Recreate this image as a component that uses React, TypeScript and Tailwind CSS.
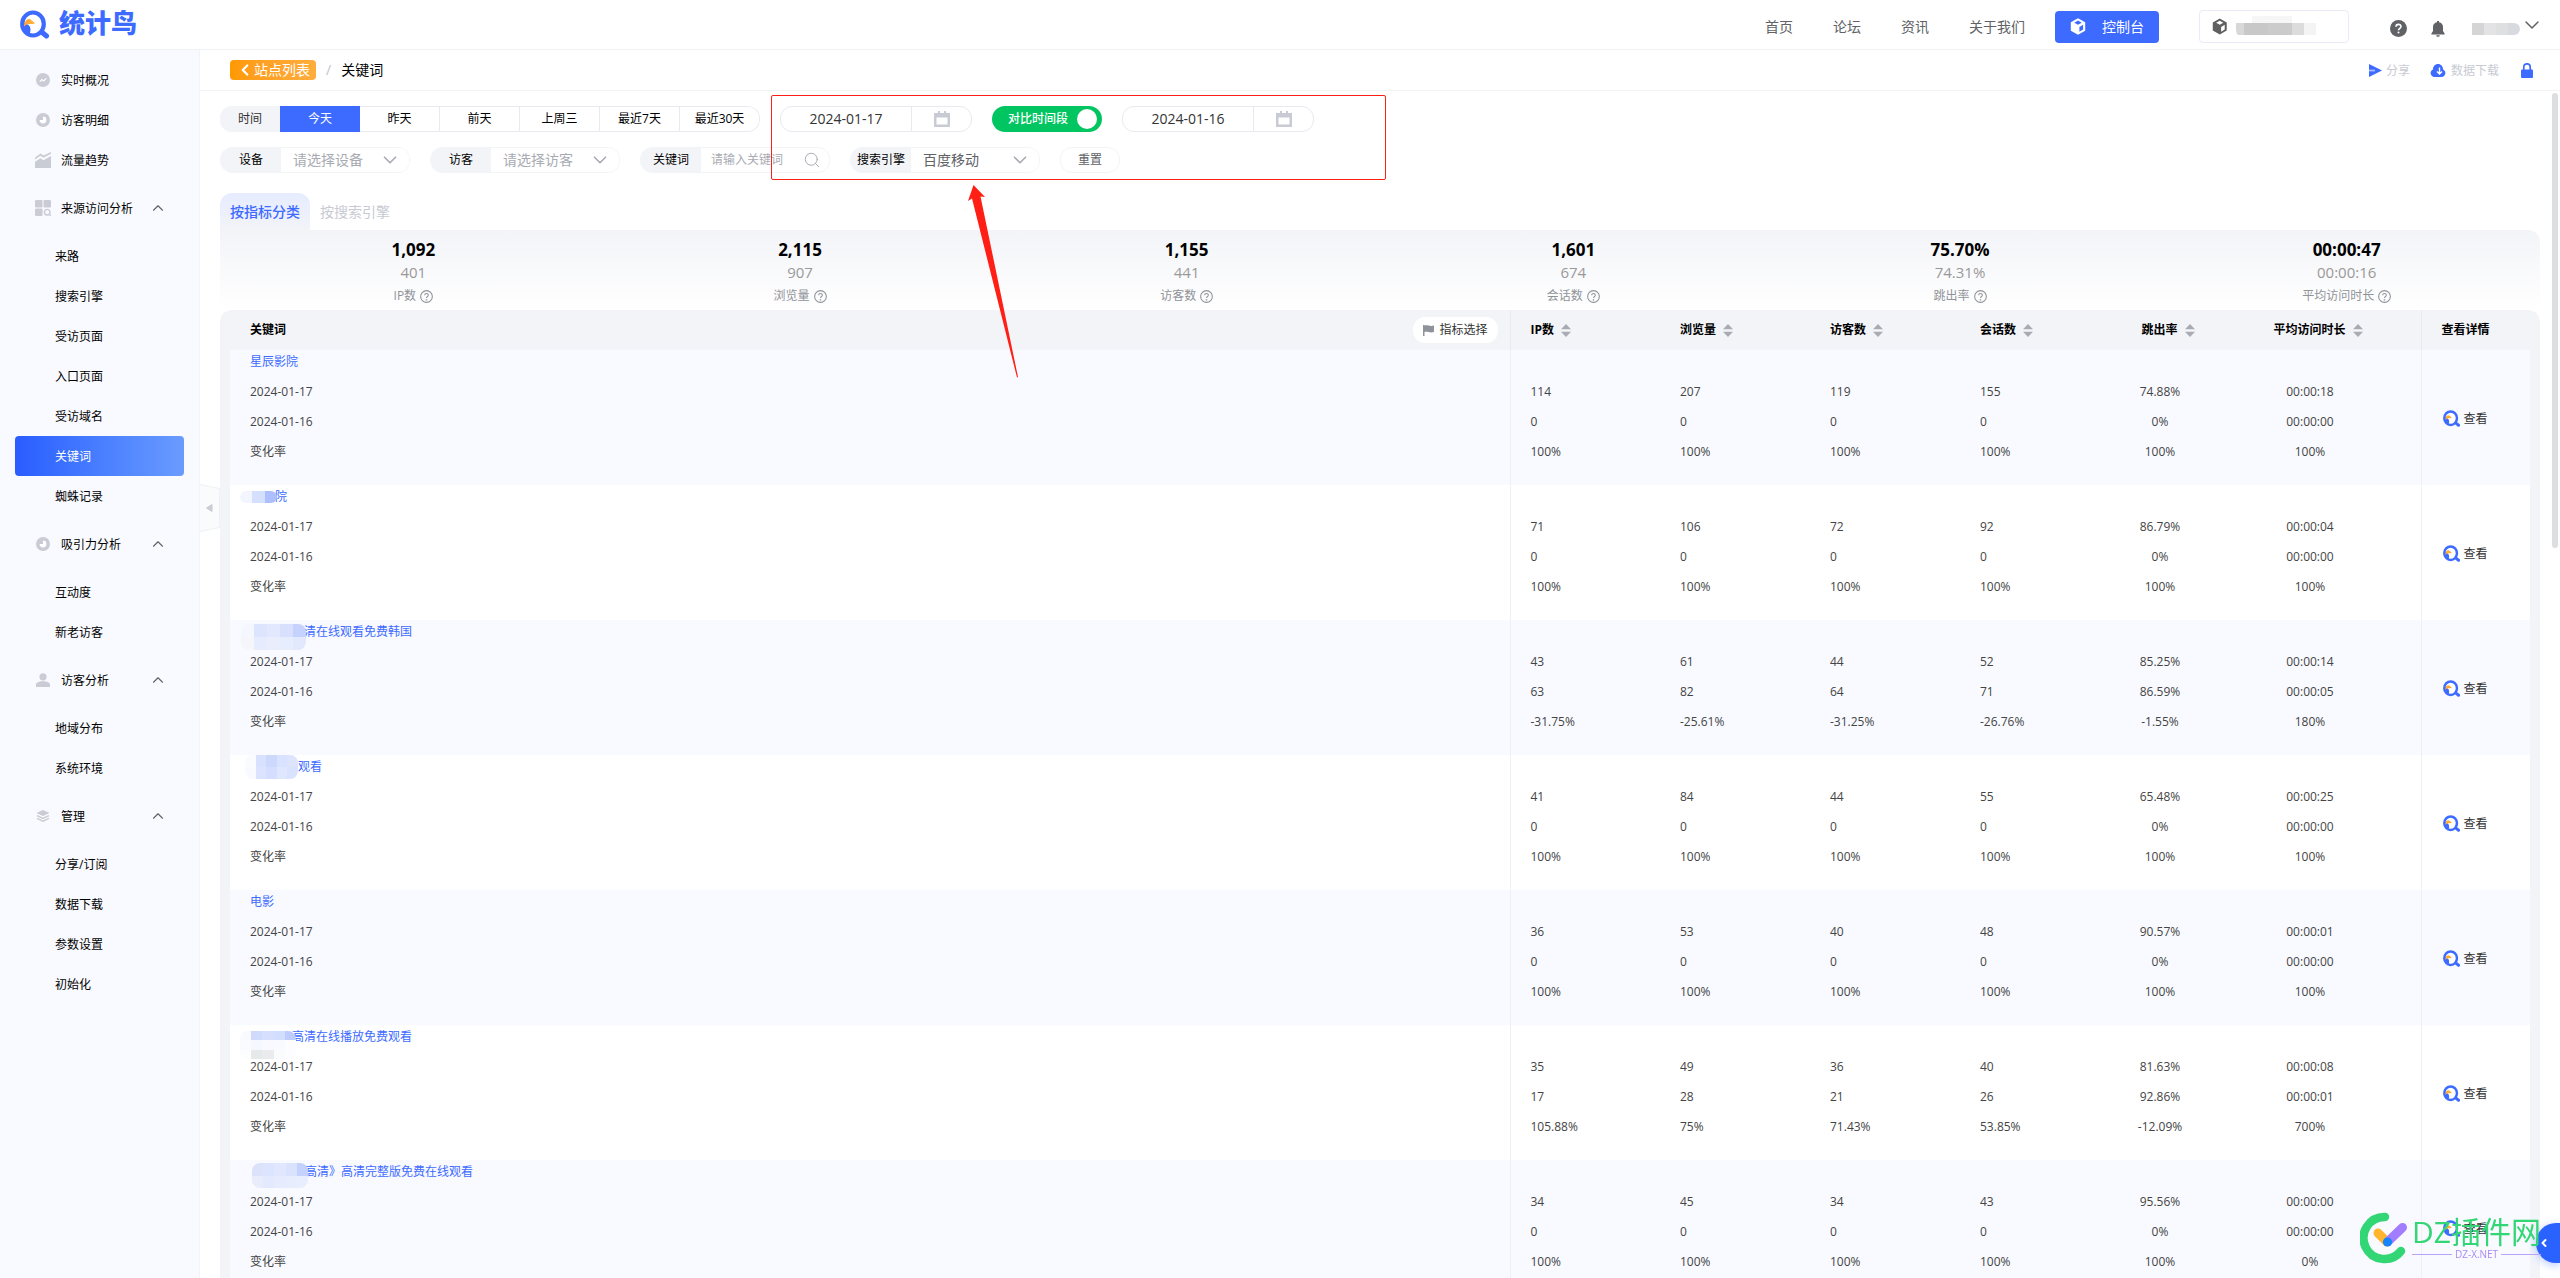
import React, { useState } from 'react';
import { ChevronDown, ChevronLeft, ChevronUp, Search } from 'lucide-react';
import clsx from 'clsx';

interface MenuItem {
  label: string;
  icon?: React.ReactNode;
  children?: string[];
}

interface MosaicShape {
  x: number;
  y: number;
  w: number;
  h: number;
  offset: number;
  rows: string[][];
}

interface KeywordRow {
  keyword: string;
  mosaic?: MosaicShape;
  // one array per metric: current, previous, change
  metrics: string[][];
}

const RealtimeIcon = () => (
  <svg width="14" height="14" viewBox="0 0 14 14">
    <circle cx="7" cy="7" r="7" fill="#c9ccd4" />
    <path d="M3.8 8.6l2.2-2 1.6 1.4 2.8-2.6" fill="none" stroke="#fff" strokeWidth="1.2" />
  </svg>
);

const PieIcon = () => (
  <svg width="14" height="14" viewBox="0 0 14 14">
    <circle cx="7" cy="7" r="7" fill="#c9ccd4" />
    <path d="M7 3.6A3.4 3.4 0 1 1 3.6 7H7z" fill="#fff" />
  </svg>
);

const TrendIcon = () => (
  <svg width="16" height="16" viewBox="0 0 16 16">
    <path d="M0 5.5L5.5 1.5l3 2L16 0v1.8L8.4 5.8l-3-2L0 7.6z" fill="#c9ccd4" />
    <path d="M0 9.8l5.5-3.6 3 2L16 4v12H0z" fill="#c9ccd4" />
  </svg>
);

const SourceIcon = () => (
  <svg width="16" height="16" viewBox="0 0 16 16">
    <rect width="7.5" height="7.5" rx="1" fill="#c9ccd4" />
    <rect x="8.5" width="7.5" height="7.5" rx="1" fill="#c9ccd4" />
    <rect y="8.5" width="7.5" height="7.5" rx="1" fill="#c9ccd4" />
    <circle cx="12.2" cy="12.2" r="2.8" fill="none" stroke="#c9ccd4" strokeWidth="1.4" />
    <path d="M14 14l2 2" stroke="#c9ccd4" strokeWidth="1.4" />
  </svg>
);

const PersonIcon = () => (
  <svg width="14" height="14" viewBox="0 0 14 14" fill="#c9ccd4">
    <circle cx="7" cy="3.8" r="3.6" />
    <path d="M0 14v-2.4C0 9.4 3 8.8 5 8.2h4c2 .6 5 1.2 5 3.4V14z" />
  </svg>
);

const LayersIcon = () => (
  <svg width="14" height="12" viewBox="0 0 14 12">
    <path d="M7 0l6.5 3L7 6 .5 3z" fill="#c9ccd4" />
    <path d="M1 5.6l6 2.8 6-2.8M1 8.4l6 2.8 6-2.8" fill="none" stroke="#c9ccd4" strokeWidth="1.4" />
  </svg>
);

const CubeIcon = () => (
  <svg width="16" height="17" viewBox="0 0 16 17">
    <path
      fill="currentColor"
      fillRule="evenodd"
      d="M8 .3l7.2 4v8.4L8 16.7l-7.2-4V4.3zM8 2.6L4.3 4.7 8 6.8l3.7-2.1zM9.4 8.9v4.9l3.7-2.2V6.800z"
    />
  </svg>
);

const BirdIcon = ({ size }: { size: number }) => (
  <svg width={size} height={size} viewBox="0 0 29 28">
    <path d="M21 21l5.5 4.5" stroke="#3d6bff" strokeWidth="5" strokeLinecap="round" />
    <ellipse cx="13" cy="13.5" rx="10.8" ry="11.5" fill="#fff" stroke="#3d6bff" strokeWidth="4.2" />
    <path d="M4 12c4 2 6.500 3 6.500 7 0 3-1 5-2 5.500C4 23 1.500 17 2.500 12z" fill="#3d6bff" />
    <path d="M4 16c0-4 2-7.500 5-7.500 2 0 3 2.500 6.300 4-2.300 1.500-4 .8-6 1C7 13.700 5.500 14.500 4 16z" fill="#ffab38" />
  </svg>
);

const QuestionIcon = () => (
  <svg width="13" height="13" viewBox="0 0 12 12" fill="none" stroke="#909399">
    <circle cx="6" cy="6" r="5.4" />
    <path d="M4.3 4.9c0-2.3 3.4-2.2 3.4-.1C7.7 6 6 6 6 7.4" />
    <circle cx="6" cy="9" r=".3" />
  </svg>
);

const SortIcon = () => (
  <svg width="10" height="13" viewBox="0 0 10 13" fill="#a8abb2">
    <path d="M5 0l5 5.200H0zM5 13L0 7.800h10z" />
  </svg>
);

const CalendarIcon = () => (
  <svg width="16" height="16" viewBox="0 0 16 16">
    <path fill="#c8cbd4" fillRule="evenodd" d="M0 2h4V0h2v2h4V0h2v2h4v14H0zM2.500 6.500v7h11v-7z" />
  </svg>
);

const menu: MenuItem[] = [
  { label: '实时概况', icon: <RealtimeIcon /> },
  { label: '访客明细', icon: <PieIcon /> },
  { label: '流量趋势', icon: <TrendIcon /> },
  {
    label: '来源访问分析',
    icon: <SourceIcon />,
    children: ['来路', '搜索引擎', '受访页面', '入口页面', '受访域名', '关键词', '蜘蛛记录'],
  },
  { label: '吸引力分析', icon: <PieIcon />, children: ['互动度', '新老访客'] },
  { label: '访客分析', icon: <PersonIcon />, children: ['地域分布', '系统环境'] },
  { label: '管理', icon: <LayersIcon />, children: ['分享/订阅', '数据下载', '参数设置', '初始化'] },
];

const summary = [
  { value: '1,092', previous: '401', label: 'IP数' },
  { value: '2,115', previous: '907', label: '浏览量' },
  { value: '1,155', previous: '441', label: '访客数' },
  { value: '1,601', previous: '674', label: '会话数' },
  { value: '75.70%', previous: '74.31%', label: '跳出率' },
  { value: '00:00:47', previous: '00:00:16', label: '平均访问时长' },
];

const rows: KeywordRow[] = [
  {
    keyword: '星辰影院',
    metrics: [
      ['114', '0', '100%'],
      ['207', '0', '100%'],
      ['119', '0', '100%'],
      ['155', '0', '100%'],
      ['74.88%', '0%', '100%'],
      ['00:00:18', '00:00:00', '100%'],
    ],
  },
  {
    keyword: '院',
    mosaic: { x: -10, y: 6, w: 37, h: 12, offset: 25, rows: [['#f3f6ff', '#d5dffe', '#adc0fd']] },
    metrics: [
      ['71', '0', '100%'],
      ['106', '0', '100%'],
      ['72', '0', '100%'],
      ['92', '0', '100%'],
      ['86.79%', '0%', '100%'],
      ['00:00:04', '00:00:00', '100%'],
    ],
  },
  {
    keyword: '清在线观看免费韩国',
    mosaic: {
      x: -9,
      y: 4,
      w: 65,
      h: 26,
      offset: 54,
      rows: [
        ['#f5f7fe', '#dce4fe', '#e2e8fe', '#d8e0fd', '#c5d2fd'],
        ['#f4f6fa', '#e6ebfd', '#eaeefc', '#e8edfd', '#e2e9fd'],
      ],
    },
    metrics: [
      ['43', '63', '-31.75%'],
      ['61', '82', '-25.61%'],
      ['44', '64', '-31.25%'],
      ['52', '71', '-26.76%'],
      ['85.25%', '86.59%', '-1.55%'],
      ['00:00:14', '00:00:05', '180%'],
    ],
  },
  {
    keyword: '观看',
    mosaic: {
      x: -5,
      y: 0,
      w: 53,
      h: 24,
      offset: 48,
      rows: [
        ['#fafbff', '#d8e1fe', '#cdd8fd', '#d9e2fe', '#dde5fe'],
        ['#f8faff', '#dbe3fe', '#d5defe', '#dfe7fe', '#d9e2fe'],
      ],
    },
    metrics: [
      ['41', '0', '100%'],
      ['84', '0', '100%'],
      ['44', '0', '100%'],
      ['55', '0', '100%'],
      ['65.48%', '0%', '100%'],
      ['00:00:25', '00:00:00', '100%'],
    ],
  },
  {
    keyword: '电影',
    metrics: [
      ['36', '0', '100%'],
      ['53', '0', '100%'],
      ['40', '0', '100%'],
      ['48', '0', '100%'],
      ['90.57%', '0%', '100%'],
      ['00:00:01', '00:00:00', '100%'],
    ],
  },
  {
    keyword: '高清在线播放免费观看',
    mosaic: {
      x: -10,
      y: 6,
      w: 56,
      h: 28,
      offset: 42,
      rows: [
        ['#f8faff', '#cfdafd', '#d6dffe', '#d3ddfe', '#becdfd'],
        ['#fafbfe', '#f5f8ff', '#f8faff', '#f8faff', '#fdfdff'],
        ['#fcfdfe', '#e6e9ea', '#e9ebec', '#fafbfd', '#fdfdff'],
      ],
    },
    metrics: [
      ['35', '17', '105.88%'],
      ['49', '28', '75%'],
      ['36', '21', '71.43%'],
      ['40', '26', '53.85%'],
      ['81.63%', '92.86%', '-12.09%'],
      ['00:00:08', '00:00:01', '700%'],
    ],
  },
  {
    keyword: '高清》高清完整版免费在线观看',
    mosaic: {
      x: 2,
      y: 3,
      w: 56,
      h: 25,
      offset: 55,
      rows: [
        ['#dce2fa', '#dce4fe', '#e0e7fe', '#dae3fe', '#c4d1fd'],
        ['#e9edfb', '#e4eafe', '#e6ecfe', '#e8edfe', '#e8eefe'],
      ],
    },
    metrics: [
      ['34', '0', '100%'],
      ['45', '0', '100%'],
      ['34', '0', '100%'],
      ['43', '0', '100%'],
      ['95.56%', '0%', '100%'],
      ['00:00:00', '00:00:00', '0%'],
    ],
  },
];

const Mosaic = ({ shape }: { shape: MosaicShape }) => (
  <span
    className="absolute flex flex-col overflow-hidden rounded-lg"
    style={{ left: shape.x, top: shape.y, width: shape.w, height: shape.h }}
  >
    {shape.rows.map((colors, i) => (
      <span key={i} className="flex flex-1">
        {colors.map((color, j) => (
          <span key={j} className="flex-1" style={{ backgroundColor: color }} />
        ))}
      </span>
    ))}
  </span>
);

const Header = () => (
  <header className="flex h-[50px] shrink-0 items-center border-b border-[#f0f1f4] bg-white pl-5 pr-4">
    <a href="#home" className="flex items-center gap-[10px]">
      <BirdIcon size={29} />
      <span className="pb-1 text-[26px] font-black leading-8 text-[#3d6bff]">统计鸟</span>
    </a>
    <nav className="ml-auto flex items-center gap-10 pt-1 text-sm text-[#606266]">
      <a href="#home">首页</a>
      <a href="#forum">论坛</a>
      <a href="#news">资讯</a>
      <a href="#about">关于我们</a>
    </nav>
    <button className="ml-[30px] mt-1 flex h-8 w-[104px] items-center gap-4 rounded bg-[#3d6bff] pl-[15px] text-sm text-white">
      <CubeIcon />
      控制台
    </button>
    <button aria-label="站点" className="ml-10 mt-1 flex h-[33px] w-[150px] items-center rounded border border-[#ebebf7] pl-3 text-[#606060]">
      <CubeIcon />
      <span className="ml-2 flex h-[22px] w-[116px] flex-col overflow-hidden rounded-lg">
        <span className="ml-4 h-[7px] w-[40px] bg-[#f6f6f7]" />
        <span className="flex h-3">
          <span className="w-2 bg-[#d8d8d8]" />
          <span className="w-6 bg-[#c8c8c9]" />
          <span className="w-6 bg-[#cbcbcb]" />
          <span className="w-3 bg-[#dcdcdc]" />
          <span className="w-3 bg-[#f4f4f5]" />
        </span>
      </span>
    </button>
    <button aria-label="帮助" className="ml-[41px] mt-2">
      <svg width="17" height="17" viewBox="0 0 17 17">
        <circle cx="8.5" cy="8.5" r="8.5" fill="#606266" />
        <path d="M6 6.800c0-3.300 5-3.200 5-.2 0 1.800-2.500 1.800-2.500 3.700" fill="none" stroke="#fff" strokeWidth="1.6" />
        <circle cx="8.5" cy="12.6" r="1" fill="#fff" />
      </svg>
    </button>
    <button aria-label="消息" className="ml-6 mt-2">
      <svg width="14" height="16" viewBox="0 0 14 16" fill="#606266">
        <path d="M6 0h2v1.200c2.600.5 4 2.300 4 4.800v4l1.600 2.500V13.500H.4V12.500L2 10V6c0-2.500 1.400-4.300 4-4.800zM5.200 14.300h3.600c0 2-3.600 2-3.600 0z" />
      </svg>
    </button>
    <button aria-label="账号" className="ml-[27px] flex items-center">
      <span className="mt-2 flex h-3 overflow-hidden rounded-r-lg">
        <span className="w-3 bg-[#d5d5d6]" />
        <span className="w-3 bg-[#e3e3e6]" />
        <span className="w-3 bg-[#dedfe1]" />
        <span className="w-3 bg-[#d7dade]" />
      </span>
      <ChevronDown size={24} strokeWidth={1.5} className="text-[#606266]" />
    </button>
  </header>
);

const Sidebar = () => (
  <aside className="w-[200px] shrink-0 border-r border-[#f3f4f8] bg-[#f9faff] pt-[10px] text-xs text-black">
    {menu.map((item) => (
      <div key={item.label}>
        <a
          href="#menu"
          className={clsx('flex items-center pl-[35px] pr-8', item.children ? 'h-14' : 'h-10')}
        >
          <span className="flex w-4 justify-center">{item.icon}</span>
          <span className="ml-[10px] pt-[2px]">{item.label}</span>
          {item.children && <ChevronUp size={18} strokeWidth={1.5} className="ml-auto text-[#606266]" />}
        </a>
        {item.children?.map((child) => (
          <a
            key={child}
            href="#menu"
            className={clsx(
              'mx-[15px] flex h-10 items-center pl-10 pt-[2px]',
              child === '关键词' && 'rounded bg-linear-to-r from-[#2a5cff] to-[#6a9bff] text-white'
            )}
          >
            {child}
          </a>
        ))}
      </div>
    ))}
  </aside>
);

const Breadcrumb = () => (
  <div className="flex h-[41px] shrink-0 items-center border-b border-[#f3f4f6] pl-[30px] pr-[27px] text-sm">
    <a
      href="#sites"
      className="flex h-5 w-[86px] items-center rounded bg-linear-to-r from-[#ff9900] to-[#ffad3d] pl-[6px] text-white"
    >
      <ChevronLeft size={18} strokeWidth={3} />
      站点列表
    </a>
    <span className="mx-[10px] text-[#c0c4cc]">/</span>
    <span className="text-black">关键词</span>
    <div className="ml-auto flex items-center text-xs text-[#c8cad3]">
      <a href="#share" className="flex items-center gap-1">
        <svg width="13" height="13" viewBox="0 0 13 13">
          <path d="M0 0l13 6.500L0 13z" fill="#3d6bff" />
          <path d="M0 6.500h6" stroke="#a9bcff" strokeWidth="1.8" />
        </svg>
        <span className="pt-[2px]">分享</span>
      </a>
      <a href="#download" className="ml-5 flex items-center gap-[5px]">
        <svg width="16" height="13" viewBox="0 0 16 13">
          <path d="M4 13a4 4 0 0 1-1-7.600C3 2.500 5 0 8 0s5 2.500 5 5.400A4 4 0 0 1 12 13z" fill="#3d6bff" />
          <path d="M9.500 3.500v6M7 7.500l2.500 2.500L12 7.500" fill="none" stroke="#fff" strokeWidth="1.4" />
        </svg>
        <span className="pt-[2px]">数据下载</span>
      </a>
      <button aria-label="锁定" className="ml-[22px]">
        <svg width="12" height="15" viewBox="0 0 12 15">
          <path d="M2.800 7V4a3.200 3.200 0 0 1 6.400 0v3" fill="none" stroke="#3d6bff" strokeWidth="1.7" />
          <rect y="6.5" width="12" height="8.5" rx="1" fill="#3d6bff" />
        </svg>
      </button>
    </div>
  </div>
);

const DateField = ({ label, value }: { label: string; value: string }) => (
  <label className="flex h-[26px] w-48 overflow-hidden rounded-xl border border-[#e8eaf0] bg-white">
    <input
      aria-label={label}
      defaultValue={value}
      className="w-[131px] border-r border-[#e8eaf0] text-center text-sm text-[#333] outline-none"
    />
    <span className="flex flex-1 items-center justify-center">
      <CalendarIcon />
    </span>
  </label>
);

const SelectField = ({ label, value, muted }: { label: string; value: string; muted?: boolean }) => (
  <label className="relative flex h-[26px] w-[190px] items-center overflow-hidden rounded-xl border border-[#f3f4f8]">
    <span className="flex h-full w-[60px] shrink-0 items-center justify-center bg-[#f3f4f8] text-xs text-black">
      {label}
    </span>
    <select
      className={clsx(
        'h-full flex-1 appearance-none bg-white pl-3 text-sm outline-none',
        muted ? 'text-[#a8abb2]' : 'text-[#606266]'
      )}
    >
      <option>{value}</option>
    </select>
    <ChevronDown size={22} strokeWidth={1.8} className="pointer-events-none absolute right-2 text-[#a8abb2]" />
  </label>
);

const Filters = () => {
  const [range, setRange] = useState('今天');
  const [compare, setCompare] = useState(true);

  return (
    <div className="flex flex-col gap-[15px]">
      <div className="flex items-center gap-5">
        <div className="flex h-[26px] w-[540px] overflow-hidden rounded-xl text-xs text-black">
          <span className="flex w-[60px] items-center justify-center bg-[#f3f4f8] text-[#333]">时间</span>
          {['今天', '昨天', '前天', '上周三', '最近7天', '最近30天'].map((name) => (
            <button
              key={name}
              onClick={() => setRange(name)}
              className={clsx(
                'w-20 last:rounded-r-xl',
                range === name ? 'bg-[#3d6bff] text-white' : 'border-y border-r border-[#e8eaf0] bg-white'
              )}
            >
              {name}
            </button>
          ))}
        </div>
        <DateField label="日期" value="2024-01-17" />
        <button
          role="switch"
          aria-checked={compare}
          onClick={() => setCompare(!compare)}
          className="flex h-[26px] w-[110px] items-center justify-between rounded-full bg-[#00c561] pl-4 pr-[5px] text-xs font-medium text-white"
        >
          对比时间段
          <span className="size-5 rounded-full bg-white" />
        </button>
        <DateField label="对比日期" value="2024-01-16" />
      </div>
      <div className="flex items-center gap-5">
        <SelectField label="设备" value="请选择设备" muted />
        <SelectField label="访客" value="请选择访客" muted />
        <label className="flex h-[26px] w-[190px] items-center overflow-hidden rounded-xl border border-[#f3f4f8] pr-2">
          <span className="flex h-full w-[60px] shrink-0 items-center justify-center bg-[#f3f4f8] text-xs text-black">
            关键词
          </span>
          <input
            placeholder="请输入关键词"
            className="w-0 flex-1 pl-[10px] text-xs outline-none placeholder:text-[#a8abb2]"
          />
          <Search size={18} strokeWidth={1.3} className="text-[#a8abb2]" />
        </label>
        <SelectField label="搜索引擎" value="百度移动" />
        <button className="h-[26px] w-[60px] rounded-xl border border-[#f3f4f8] text-xs text-[#606266]">重置</button>
      </div>
    </div>
  );
};

const Summary = () => (
  <div className="grid h-20 grid-cols-6 rounded-tr-xl bg-linear-to-b from-[#f3f4f8] to-white pt-[9px] text-center">
    {summary.map((item) => (
      <div key={item.label} className="flex flex-col items-center">
        <span className="text-[17px] font-bold leading-[22px] text-black">{item.value}</span>
        <span className="text-[15px] leading-[22px] text-[#999]">{item.previous}</span>
        <span className="flex items-center gap-1 text-xs leading-[26px] text-[#909399]">
          {item.label}
          <QuestionIcon />
        </span>
      </div>
    ))}
  </div>
);

const metricNames = ['IP数', '浏览量', '访客数', '会话数', '跳出率', '平均访问时长'];

const KeywordTable = () => (
  <div className="rounded-t-xl bg-[#f3f4f8] px-[10px]">
    <table className="w-full table-fixed border-collapse text-left text-xs text-[#444]">
      <colgroup>
        <col />
        <col className="w-[150px]" />
        <col className="w-[150px]" />
        <col className="w-[150px]" />
        <col className="w-[125px]" />
        <col className="w-[150px]" />
        <col className="w-[150px]" />
        <col className="w-9" />
        <col className="w-[109px]" />
      </colgroup>
      <thead>
        <tr className="h-10 text-black">
          <th className="border-r border-[#e9ebf1] p-0 pl-5">
            <div className="flex items-center justify-between pr-3">
              关键词
              <button className="flex h-[26px] w-[85px] items-center gap-[6px] rounded-xl bg-white pl-[10px] font-normal text-[#333]">
                <svg width="11" height="11" viewBox="0 0 11 11" fill="#909399">
                  <path d="M0 0h1.500v11H0zM1.500.5c3-1 5 1.300 9.500 0v6.500c-4.500 1.300-6.500-1-9.500 0z" />
                </svg>
                指标选择
              </button>
            </div>
          </th>
          {metricNames.map((name, i) => (
            <th key={name} className={clsx('p-0', i < 4 && 'pl-5')}>
              <div className={clsx('flex items-center gap-[7px]', i > 3 && 'justify-center pl-4')}>
                {name}
                <SortIcon />
              </div>
            </th>
          ))}
          <th className="p-0" />
          <th className="border-l border-[#e9ebf1] p-0 pl-5">查看详情</th>
        </tr>
      </thead>
      <tbody>
        {rows.map((row) => (
          <tr key={row.keyword} className="h-[135px] odd:bg-[#f9faff] even:bg-white">
            <td className="border-r border-[#eef0f5] p-0 pl-5 align-top">
              <div className="relative h-[27px] text-[#3d6bff]">
                <a href="#keyword" className="block leading-6" style={{ paddingLeft: row.mosaic?.offset }}>
                  {row.keyword}
                </a>
                {row.mosaic && <Mosaic shape={row.mosaic} />}
              </div>
              <div className="relative leading-[30px]">
                <p>2024-01-17</p>
                <p>2024-01-16</p>
                <p>变化率</p>
              </div>
            </td>
            {row.metrics.map((values, i) => (
              <td
                key={i}
                className={clsx('p-0 pt-[27px] align-top leading-[30px]', i < 4 ? 'pl-5' : 'text-center')}
              >
                {values.map((value, j) => (
                  <p key={j}>{value}</p>
                ))}
              </td>
            ))}
            <td className="p-0" />
            <td className="border-l border-[#eef0f5] p-0 pl-[21px] pt-[2px]">
              <a href="#detail" className="flex items-center gap-1 text-[#333]">
                <BirdIcon size={17} />
                查看
              </a>
            </td>
          </tr>
        ))}
      </tbody>
    </table>
  </div>
);

const Annotation = () => (
  <>
    <div className="pointer-events-none absolute left-[771px] top-[95px] h-[85px] w-[615px] rounded-xs border border-[#ff1f14]" />
    <svg className="pointer-events-none absolute left-[968px] top-[185px]" width="51" height="193" viewBox="0 0 51 193">
      <path d="M5.500 0L0 16l4-2.500L49 192.500l1-.5L12.500 11.500 17 12z" fill="#ff1f14" />
    </svg>
  </>
);

const Watermark = () => (
  <div className="pointer-events-none fixed bottom-[14px] right-[19px] flex items-center gap-1">
    <svg width="48" height="52" viewBox="0 0 48 52" fill="none" strokeLinecap="round">
      <path d="M25 5A21 21 0 1 0 41 39" stroke="#33d675" strokeWidth="8.5" />
      <path d="M18 21l9 9" stroke="#ffb52e" strokeWidth="9" />
      <path d="M42.500 15.500L28 29.500" stroke="#a27dff" strokeWidth="9" />
      <circle cx="27.5" cy="30" r="4.6" fill="#1684fc" />
    </svg>
    <div className="flex flex-col">
      <span className="whitespace-nowrap text-[30px] leading-8 text-[#33d675]">DZ插件网</span>
      <span className="flex items-center gap-[3px] text-[10px] leading-3 text-[#a98bf5]">
        <span className="h-px flex-1 bg-[#b9a3f7]" />
        DZ-X.NET
        <span className="h-px flex-1 bg-[#b9a3f7]" />
      </span>
    </div>
  </div>
);

const App: React.FC = () => {
  return (
    <div className="relative flex h-screen flex-col overflow-hidden bg-white font-['Open_Sans','Noto_Sans_CJK_SC',sans-serif]">
      <Header />
      <div className="flex min-h-0 flex-1">
        <Sidebar />
        <main className="relative flex min-w-0 flex-1 flex-col">
          <Breadcrumb />
          <div className="min-h-0 flex-1 overflow-hidden px-5 pt-[15px]">
            <Filters />
            <div className="mt-5 flex h-[37px] text-sm">
              <button className="w-[90px] rounded-t-xl bg-linear-to-b from-[#e6ecff] to-[#f3f4f8] font-medium text-[#3d6bff]">
                按指标分类
              </button>
              <button className="w-[90px] text-[#c8cad3]">按搜索引擎</button>
            </div>
            <Summary />
            <KeywordTable />
          </div>
          <button aria-label="收起菜单" className="absolute left-0 top-[434px]">
            <svg width="20" height="48" viewBox="0 0 20 48">
              <path d="M0 .5l19.500 4v39L0 47.500" fill="#fafbfd" stroke="#eef0f5" />
              <path d="M6.500 24l5.500-3.500v7z" fill="#c9ccd4" stroke="#c9ccd4" strokeLinejoin="round" />
            </svg>
          </button>
          <div className="absolute right-[2px] top-[43px] h-[455px] w-[6px] rounded-full bg-[#dddee0]" />
        </main>
      </div>
      <Annotation />
      <button
        aria-label="展开"
        className="fixed bottom-[15px] right-0 flex h-10 w-6 items-center rounded-l-full bg-[#2a62ff] pl-[2px] text-white shadow-[0_2px_8px_rgba(42,98,255,0.35)]"
      >
        <ChevronLeft size={12} strokeWidth={4} />
      </button>
      <Watermark />
    </div>
  );
};

export default App;
